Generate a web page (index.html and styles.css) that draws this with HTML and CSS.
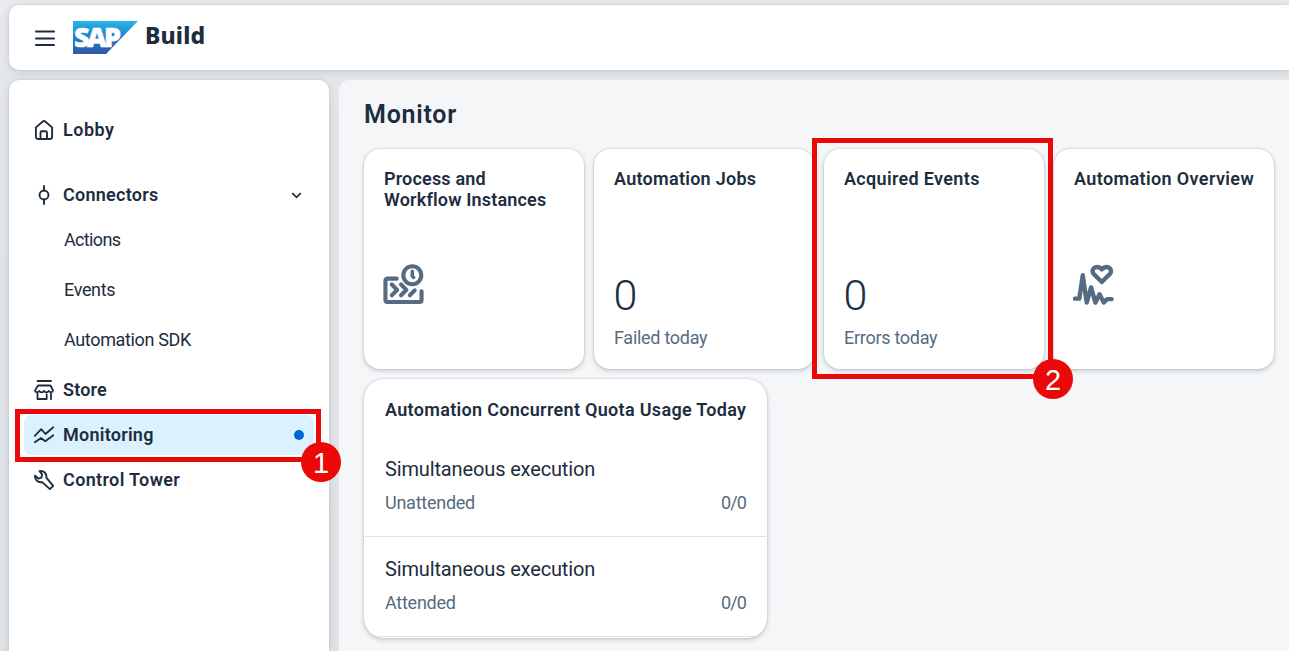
FILE: index.html
```html
<!DOCTYPE html>
<html lang="en">
<head>
<meta charset="utf-8">
<title>SAP Build - Monitor</title>
<link rel="stylesheet" href="styles.css">
</head>
<body>
<div class="app">
  <header class="shellbar">
    <svg class="menu" width="20" height="16" viewBox="0 0 20 16" stroke="currentColor" stroke-width="2" stroke-linecap="round"><path d="M1 1.500h18M1 8.500h18M1 15h18"/></svg>
    <svg class="logo" width="65" height="33" viewBox="0 0 65 33">
      <defs><linearGradient id="blue" x1="0" y1="0" x2="0" y2="1"><stop offset="0" stop-color="#27b4ec"/><stop offset=".5" stop-color="#1f80c8"/><stop offset="1" stop-color="#3455a6"/></linearGradient></defs>
      <path d="M0 0h65L33 33H0z" fill="url(#blue)"/>
      <text class="logo-text" x="1" y="26">SAP</text>
    </svg>
    <span class="product">Build</span>
  </header>
  <div class="body">
    <nav class="sidebar">
      <div class="item lobby">
        <svg class="icon" viewBox="0 0 20 20"><path d="M1.900 7.400 8.800 1.500a1.800 1.800 0 0 1 2.400 0l6.900 5.900v9.400a2.200 2.200 0 0 1-2.200 2.200H4.100a2.200 2.200 0 0 1-2.200-2.200zM6.500 19v-6.300a1.500 1.500 0 0 1 1.500-1.500h3.500a1.500 1.500 0 0 1 1.500 1.500V19"/></svg>
        <span class="label t-lobby">Lobby</span>
      </div>
      <div class="item connectors">
        <svg class="icon" viewBox="0 0 20 20"><circle cx="10" cy="10" r="4.500"/><path d="M10 1v4.500M10 14.500V19"/></svg>
        <span class="label t-conn">Connectors</span>
        <svg class="chevron" width="11" height="7" viewBox="0 0 11 7"><path d="M1.300 1.200 5.500 5.400 9.700 1.200"/></svg>
      </div>
      <div class="sub actions">Actions</div>
      <div class="sub">Events</div>
      <div class="sub">Automation SDK</div>
      <div class="item store">
        <svg class="icon thin" viewBox="0 0 20 20"><path d="M3.500 1h13.500M4 5.500h12.500L19 10.500c0 2-3.200 2.400-4.300.4-1 1.900-3.700 1.900-4.700 0-1 1.900-3.700 1.900-4.700 0-1.100 2-4.300 1.600-4.300-.4zM3.500 13v6h9.200v-4.500M17 13v6.200"/></svg>
        <span class="label t-store">Store</span>
      </div>
      <div class="item active">
        <svg class="icon thin" viewBox="0 0 20 20"><path d="m.8 10.800 6.400-6.600 4.300 4.800L19.300 2.300M.8 17.300l6.200-4.200 4.300 3.100 8-6"/></svg>
        <span class="label t-mon">Monitoring</span>
        <span class="dot"></span>
        <span class="callout one"><span class="num">1</span></span>
      </div>
      <div class="item tower">
        <svg class="icon" viewBox="0 0 20 20"><path d="M5.600 1.100C9.600.300 13 3.600 12.300 7.600l6.900 8.200-3.300 3.300-7.800-7C4.200 13 .500 9.800 1.100 5.600l3.300 3 2.900-.900.900-3z"/></svg>
        <span class="label t-tower">Control Tower</span>
      </div>
    </nav>
    <main class="content">
      <h1>Monitor</h1>
      <div class="tiles">
        <section class="tile">
          <h2 class="t-process">Process and<br>Workflow Instances</h2>
          <svg class="tile-icon" viewBox="0 0 42 42"><path d="M14 15H4.500a2 2 0 0 0-2 2v20a2 2 0 0 0 2 2h33a2 2 0 0 0 2-2V28M9 21l5.500 5.500L9 32M18.500 21 24 26.500 18.500 32M27.500 32l5-5"/><circle cx="30" cy="11.500" r="9.200"/><path class="hand" d="M30 7.500V12.500l1.500 1.300"/></svg>
        </section>
        <section class="tile">
          <h2 class="t-jobs">Automation Jobs</h2>
          <div class="kpi">0</div>
          <div class="caption">Failed today</div>
        </section>
        <section class="tile">
          <h2 class="t-events">Acquired Events</h2>
          <div class="kpi">0</div>
          <div class="caption">Errors today</div>
          <span class="callout two"><span class="num">2</span></span>
        </section>
        <section class="tile">
          <h2 class="t-over">Automation Overview</h2>
          <svg class="tile-icon pulse" viewBox="0 0 42 42"><path d="M2 35.500h4.500L10 11.500l4 28 4.500-15.500 4.500 15.500 4.200-8.500 4.300 8.500 3.500-3.500H39.500"/><path d="m29.500 18.500-8.500-8.500C17.500 4.500 25 .300 29.500 5.500 34 .300 41.500 4.500 38 10z"/></svg>
        </section>
        <section class="quota">
          <h2 class="t-quota">Automation Concurrent Quota Usage Today</h2>
          <div class="usage">
            <div class="usage-title">Simultaneous execution</div>
            <div class="usage-row"><span>Unattended</span><span class="ratio">0/0</span></div>
          </div>
          <div class="usage">
            <div class="usage-title">Simultaneous execution</div>
            <div class="usage-row"><span>Attended</span><span class="ratio">0/0</span></div>
          </div>
        </section>
      </div>
    </main>
  </div>
</div>
</body>
</html>
```
FILE: styles.css
```css
* { box-sizing: border-box; }
body {
  margin: 0;
  height: 651px;
  overflow: hidden;
  font-family: Roboto, "Open Sans", sans-serif;
  font-size: 18px;
  color: #1d2d3e;
  background: linear-gradient(180deg, #e9ebee 0, #e3e6e9 120px, #e0e3e6 651px);
}
.app { height: 651px; padding: 5px 0 0 9px; display: flex; flex-direction: column; gap: 10px; }
.shellbar {
  flex: none;
  height: 65px;
  padding: 0 0 0 26px;
  display: flex;
  align-items: center;
  background: #fff;
  border-radius: 10px 0 0 10px;
  box-shadow: 0 2px 10px rgba(34, 53, 72, .16), 0 0 2px rgba(34, 53, 72, .16);
}
.menu { margin-top: 1px; }
.logo { margin-left: 18px; overflow: visible; }
.logo-text { font: 800 27px "Open Sans", sans-serif; letter-spacing: -2.6px; fill: #fff; stroke: #fff; stroke-width: .5px; }
.product { margin: -5px 0 0 7px; font: 800 23px/30px "Noto Sans", sans-serif; letter-spacing: .15px; }

.body { flex: 1; min-height: 0; display: flex; gap: 10px; }
.sidebar {
  width: 320px;
  flex: none;
  padding: 30px 15px 0;
  background: #fff;
  border-radius: 10px 10px 0 0;
  box-shadow: 0 2px 10px rgba(34, 53, 72, .13), 0 0 2px rgba(34, 53, 72, .2);
}
.item {
  position: relative;
  height: 40px;
  padding: 0 10px;
  display: flex;
  align-items: center;
  gap: 9px;
  border-radius: 8px;
  font-weight: 600;
}
.label { padding-bottom: 2px; }
.t-lobby { letter-spacing: .5px; }
.t-conn { letter-spacing: .25px; }
.t-store { letter-spacing: .2px; }
.t-mon { letter-spacing: .25px; }
.t-tower { letter-spacing: .36px; }
.connectors { margin-top: 25px; padding-right: 12px; }
.store { margin-top: 5px; }
.active { margin: 5px 0; background: #dcf1ff; }
.icon { width: 20px; height: 20px; fill: none; stroke: currentColor; stroke-width: 1.9; stroke-linejoin: round; stroke-linecap: round; }
.icon.thin { stroke-width: 1.8; }
.chevron { margin-left: auto; fill: none; stroke: currentColor; stroke-width: 1.7; }
.sub { height: 50px; padding-left: 40px; line-height: 50px; letter-spacing: -.35px; }
.actions { letter-spacing: -.65px; }
.dot { width: 10px; height: 10px; margin-left: auto; border-radius: 50%; background: #0064d9; }

.content { flex: 1; padding: 20px 0 0 25px; background: #f4f6f8; border-radius: 10px 0 0 0; }
h1 { margin: 0 0 19px; font-size: 25px; line-height: 30px; font-weight: 600; letter-spacing: .75px; }
h2 { margin: 0; font-size: 18px; line-height: 21px; font-weight: 600; white-space: nowrap; }
.t-process { letter-spacing: .17px; }
.t-jobs { letter-spacing: .27px; }
.t-events { letter-spacing: .33px; }
.t-over { letter-spacing: .37px; }
.t-quota { letter-spacing: .31px; }
.tiles { width: 910px; display: flex; flex-wrap: wrap; gap: 10px; }
.tile, .quota {
  position: relative;
  background: #fff;
  border-radius: 16px;
  box-shadow: 0 0 2px rgba(34, 53, 72, .25), 0 2px 5px rgba(34, 53, 72, .2);
}
.tile { width: 220px; height: 220px; padding: 19px 20px; display: flex; flex-direction: column; }
.tile-icon { width: 41px; height: 41px; margin: auto 0 45px -.8px; fill: none; stroke: #556b82; stroke-width: 4.2; stroke-linecap: round; stroke-linejoin: round; }
.pulse { stroke-width: 4.5; }
.hand { stroke-width: 3.5; }
.kpi { margin: auto 0 0 -.5px; font-size: 43px; line-height: 50px; font-weight: 300; }
.caption { margin: 7px 0 1px; line-height: 22px; letter-spacing: -.28px; color: #556b82; }
.quota { width: 403px; height: 259px; padding: 20px 1px 0; border-radius: 20px; overflow: hidden; }
.quota h2 { padding: 0 20px; }
.usage { height: 100px; padding: 21px 20px 0; border-bottom: 1px solid #e0e3e6; }
.quota h2 + .usage { height: 117px; padding-top: 38px; }
.usage-title { font-size: 20px; line-height: 22px; letter-spacing: -.14px; }
.usage-row { margin-top: 12px; display: flex; justify-content: space-between; line-height: 22px; letter-spacing: -.25px; color: #556b82; }
.ratio { letter-spacing: -.9px; }

.callout { position: absolute; z-index: 2; border: 5px solid #ea0808; }
.one { inset: -6px -7px -7px -9px; }
.two { inset: -11px -9px -10px -12px; }
.num {
  position: absolute;
  right: -25px;
  bottom: -25px;
  width: 40px;
  height: 40px;
  border-radius: 50%;
  background: #ea0808;
  color: #fff;
  font: 400 29px/42px "Liberation Sans", sans-serif;
  text-align: center;
}
```
